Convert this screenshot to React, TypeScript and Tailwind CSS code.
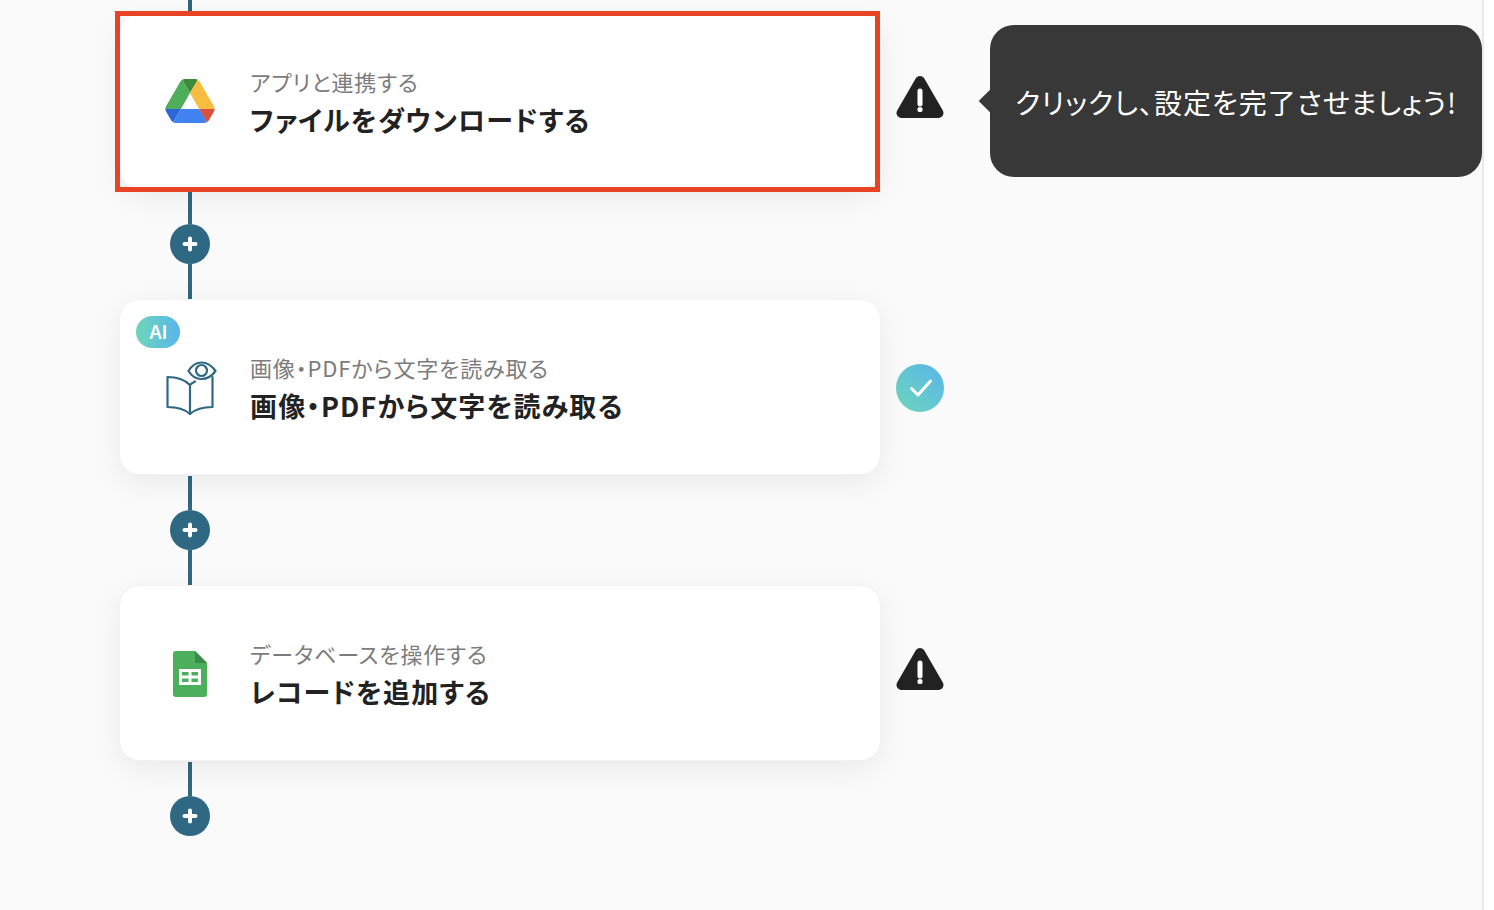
import { FC, ReactNode } from "react"

const DriveIcon = () => (
   <svg width="50" height="44" viewBox="0 0 87.3 78">
      <path d="m6.6 66.85 3.85 6.65c.8 1.4 1.95 2.5 3.3 3.3l13.75-23.8h-27.5c0 1.55.4 3.1 1.2 4.5z" fill="#2e66d8" />
      <path d="m43.65 25-13.75-23.8c-1.35.8-2.5 1.9-3.3 3.3l-25.4 44a9.06 9.06 0 0 0 -1.2 4.5h27.5z" fill="#4fae5a" />
      <path d="m73.55 76.8c1.35-.8 2.5-1.9 3.3-3.3l1.6-2.75 7.65-13.25c.8-1.4 1.2-2.95 1.2-4.5h-27.502l5.852 11.5z" fill="#db5140" />
      <path d="m43.65 25 13.75-23.8c-1.35-.8-2.9-1.2-4.5-1.2h-18.5c-1.6 0-3.15.45-4.5 1.2z" fill="#3d8a3c" />
      <path d="m59.8 53h-32.3l-13.75 23.8c1.35.8 2.9 1.2 4.5 1.2h50.8c1.6 0 3.15-.45 4.5-1.2z" fill="#3f82f0" />
      <path d="m73.4 26.5-12.7-22c-.8-1.4-1.95-2.5-3.3-3.3l-13.75 23.8 16.15 28h27.45c0-1.55-.4-3.1-1.2-4.5z" fill="#f6bd41" />
   </svg>
)

const BookIcon = () => (
   <svg width="52" height="56" viewBox="164 361 52 56" fill="none" stroke="#2f6882" strokeWidth="2.2" strokeLinejoin="round" strokeLinecap="round" className="mt-1 overflow-visible">
      <path d="M190 385c-5-5-13-8-22.500-8v30c9 0 17 2 22.500 7 5.500-5 13.500-7 22.500-7v-30" />
      <path d="M190 385v29M190 385c1.500-1.500 3-2.500 5-3.500" />
      <path d="M188.500 371c3-5 7.500-8.500 13-8.500s10.500 3.500 14 8.500c-3.500 5-8.500 8-14 8s-10-3-13-8z" />
      <circle cx="201.500" cy="370.500" r="5.500" />
   </svg>
)

const SheetsIcon = () => (
   <svg width="34" height="46" viewBox="0 0 34 46" className="mt-0.5">
      <path d="M3 0h19l12 12v31a3 3 0 0 1-3 3H3a3 3 0 0 1-3-3V3a3 3 0 0 1 3-3z" fill="#4caf5c" />
      <path d="M22 0l12 12H22z" fill="#3a8a48" />
      <path d="M6 18h22v16H6z" fill="#fff" />
      <path d="M9 21h6.500v3.500H9zM18.500 21H25v3.500h-6.500zM9 27.500h6.500V31H9zM18.500 27.500H25V31h-6.500z" fill="#4caf5c" />
   </svg>
)

const WarningIcon = () => (
   <svg width="48" height="56" viewBox="0 0 48 56">
      <path d="M24 8 5.500 40h37z" fill="#222" stroke="#222" strokeWidth="10" strokeLinejoin="round" />
      <path d="M24 18v13" stroke="#fff" strokeWidth="5" strokeLinecap="round" />
      <circle cx="24" cy="36.500" r="2.600" fill="#fff" />
   </svg>
)

const CheckIcon = () => (
   <div className="w-12 h-12 mt-0.5 rounded-full flex items-center justify-center bg-gradient-to-tr from-[#6fd6b8] to-[#59b4ea]">
      <svg width="24" height="20" viewBox="0 0 24 20" fill="none" stroke="#fff" strokeWidth="3" strokeLinecap="round" strokeLinejoin="round" className="ml-0.5">
         <path d="M2.500 10.500 9 17 21.500 3" />
      </svg>
   </div>
)

const Line = ({ className = "" }: { className?: string }) => (
   <div className={"w-1 bg-[#2f6882] " + className} />
)

const AddButton = () => (
   <div className="w-10 h-10 shrink-0 rounded-full bg-[#2f6882] flex items-center justify-center">
      <svg width="16" height="16" viewBox="0 0 16 16" stroke="#fff" strokeWidth="4" strokeLinecap="round">
         <path d="M8 2.500v11M2.500 8h11" />
      </svg>
   </div>
)

const Connector = ({ last = false }: { last?: boolean }) => (
   <div className="w-10 ml-[50px] h-[112px] flex flex-col items-center">
      <Line className="mt-[2px] h-[34px]" />
      <AddButton />
      {last ? <div className="flex-1" /> : <Line className="flex-1" />}
   </div>
)

interface StepProps {
   icon: ReactNode
   sub: string
   title: string
   status: ReactNode
   ai?: boolean
}

const Step: FC<StepProps> = ({ icon, sub, title, status, ai }) => (
   <div className="flex items-center gap-4">
      <div className="relative w-[760px] h-[174px] bg-white rounded-[20px] shadow-[0_0_0_1px_#f2f2f2,0_8px_30px_rgba(0,0,0,0.07)] flex items-center">
         {ai && (
            <div className="absolute left-4 top-4 w-11 h-8 rounded-full bg-gradient-to-r from-[#6fd6b8] to-[#59b4ea] text-white text-[18px] font-semibold font-['Inter',sans-serif] flex items-center justify-center">
               AI
            </div>
         )}
         <div className="w-[52px] ml-[44px] mr-[34px] flex justify-center">{icon}</div>
         <div className="flex flex-col [font-feature-settings:'palt']">
            <p className="text-[22px] leading-[36px] tracking-[0.85px] text-[#7c7c7c]">{sub}</p>
            <p className="text-[27px] leading-[41px] tracking-[1.15px] font-bold text-[#222]">{title}</p>
         </div>
      </div>
      {status}
   </div>
)

const App = () => {
   return (
      <div className="flex h-[910px] overflow-hidden bg-white font-['Noto_Sans_CJK_JP','Noto_Sans',sans-serif]">
         <div className="relative w-[1484px] h-full bg-[#fafafa] border-r-2 border-[#e9e9e9] pl-[120px]">
            <Line className="h-[14px] ml-[68px]" />
            <Step icon={<DriveIcon />} sub="アプリと連携する" title="ファイルをダウンロードする" status={<WarningIcon />} />
            <Connector />
            <Step ai icon={<BookIcon />} sub="画像・PDFから文字を読み取る" title="画像・PDFから文字を読み取る" status={<CheckIcon />} />
            <Connector />
            <Step icon={<SheetsIcon />} sub="データベースを操作する" title="レコードを追加する" status={<WarningIcon />} />
            <Connector last />

            <div className="absolute left-[115px] top-[11px] w-[765px] h-[181px] border-[5px] border-[#e84325] pointer-events-none" />

            <div className="absolute left-[990px] top-[25px] w-[492px] h-[152px] rounded-[24px] bg-[#383838] flex items-center pl-[25px] pt-[2px] text-white text-[28px] tracking-[1px] whitespace-nowrap [font-feature-settings:'palt']">
               <div className="absolute left-[-8px] top-[68px] w-4 h-4 rotate-45 bg-[#383838]" />
               クリックし、設定を完了させましょう!
            </div>
         </div>
      </div>
   )
}

export default App
